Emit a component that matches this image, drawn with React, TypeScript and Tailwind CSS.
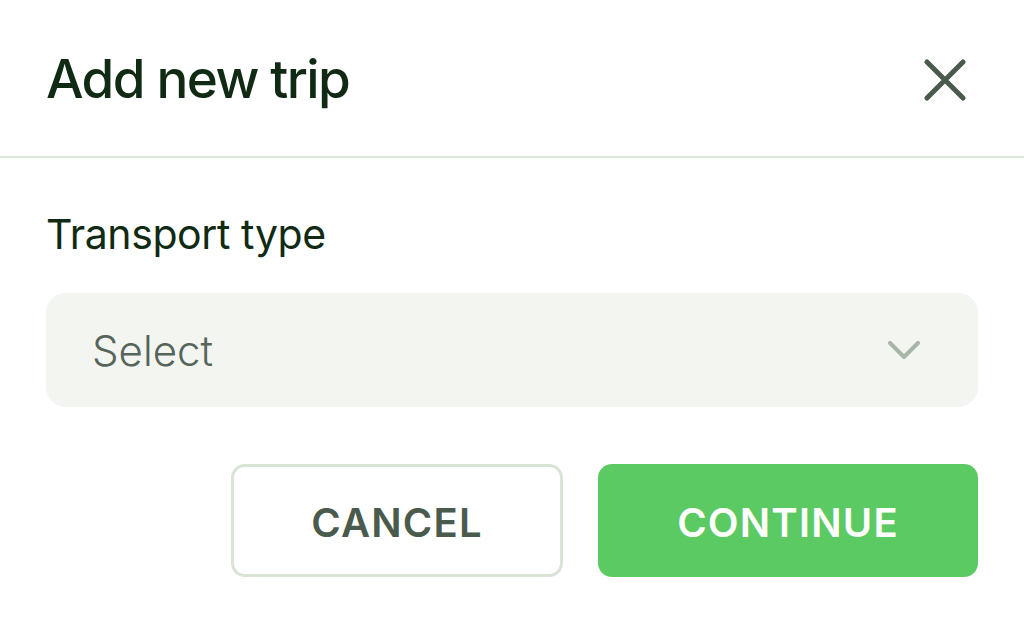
export default function App() {
  return (
    <div className="h-[623px] w-full bg-white font-['Inter',sans-serif]">
      <div className="flex h-[158px] items-center justify-between border-b-2 border-[#dbe5d8] pl-[46px] pr-[58px] pt-[4px]">
        <h1 className="text-[53px] font-medium tracking-[-0.03em] text-[#102a14]">Add new trip</h1>
        <svg width="42" height="42" viewBox="0 0 42 42" fill="none" stroke="#4a5a4c" strokeWidth="5" strokeLinecap="round">
          <path d="M3 3 39 39M39 3 3 39" />
        </svg>
      </div>
      <div className="px-[46px] pt-[56px]">
        <label className="block text-[41px] leading-none tracking-[-0.01em] text-[#102a14]">Transport type</label>
        <div className="mt-[38px] flex h-[114px] items-center justify-between rounded-[20px] bg-[#f3f5f1] pl-[46px] pr-[58px]">
          <span className="text-[42px] font-light text-[#56655a]">Select</span>
          <svg width="32" height="18" viewBox="0 0 32 18" fill="none" stroke="#a9b5a8" strokeWidth="4" strokeLinecap="round" strokeLinejoin="round">
            <path d="M2 2 16 16 30 2" />
          </svg>
        </div>
        <div className="mt-[57px] flex justify-end gap-[35px]">
          <button className="h-[113px] w-[332px] rounded-[14px] border-[3px] border-[#d9e4d6] pt-[5px] text-[40px] font-semibold tracking-[0.03em] text-[#4a5a4c]">
            CANCEL
          </button>
          <button className="h-[113px] w-[380px] rounded-[14px] bg-[#5cca62] pt-[5px] text-[40px] font-semibold tracking-[0.03em] text-white">
            CONTINUE
          </button>
        </div>
      </div>
    </div>
  )
}
